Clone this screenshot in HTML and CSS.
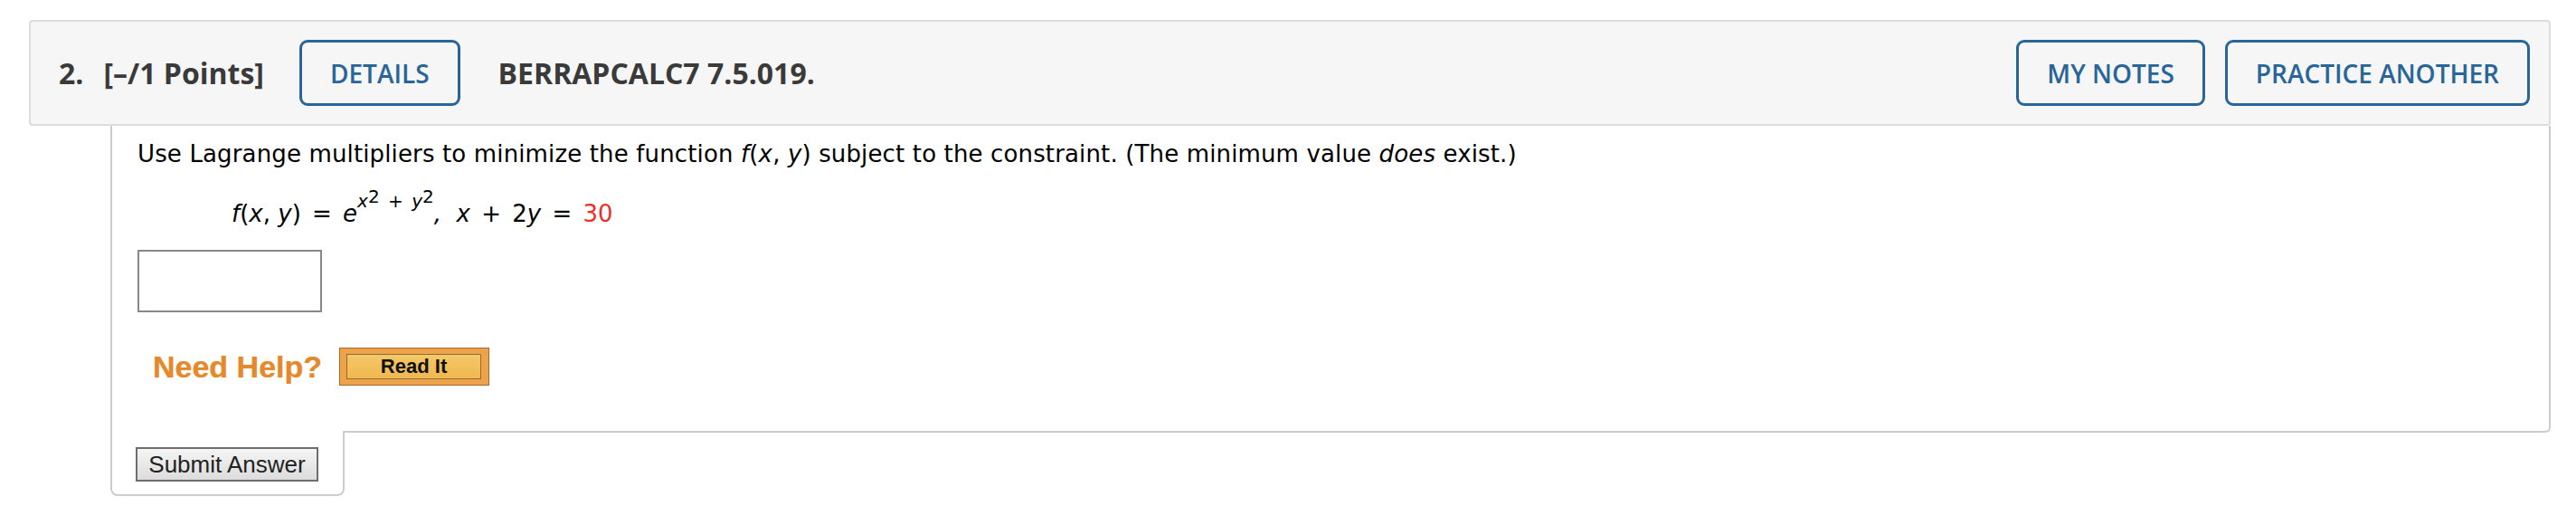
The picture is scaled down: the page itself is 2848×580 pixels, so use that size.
FILE: index.html
```html
<!DOCTYPE html>
<html>
<head>
<meta charset="utf-8">
<link rel="stylesheet" href="styles.css">
</head>
<body>
<div class="question">
  <div class="qhead">
    <span class="qnum">2.</span>
    <span class="qpts">[&ndash;/1 Points]</span>
    <span class="hbtn details">DETAILS</span>
    <span class="qid">BERRAPCALC7 7.5.019.</span>
    <span class="spacer"></span>
    <span class="hbtn">MY NOTES</span>
    <span class="hbtn">PRACTICE ANOTHER</span>
  </div>
  <div class="qbody">
    <p class="prompt">Use Lagrange multipliers to minimize the function <i>f</i>(<i>x</i>, <i>y</i>) subject to the constraint. (The minimum value <i>does</i> exist.)</p>
    <div class="formula"><i>f</i>(<i>x</i>, <i>y</i>) <span class="op">=</span> <i>e</i><span class="exp"><i>x</i><span class="sq">2</span> <span class="op">+</span> <i>y</i><span class="sq">2</span></span><i>,</i>&nbsp; <i>x</i> <span class="op">+</span> 2<i>y</i> <span class="op">=</span> <span class="red">30</span></div>
    <div class="answer"></div>
    <div class="help">
      <span class="needhelp">Need Help?</span>
      <span class="readit"><span class="readit-inner">Read It</span></span>
    </div>
  </div>
  <div class="submit-tab">
    <button class="submit">Submit Answer</button>
  </div>
</div>
</body>
</html>
```
FILE: styles.css
```css
html, body {
  margin: 0;
  padding: 0;
  background: #ffffff;
}
body {
  padding: 22px 28px 0 32px;
}
.question {
  width: 2788px;
}
.qhead {
  display: flex;
  align-items: center;
  box-sizing: border-box;
  height: 117px;
  background: #f6f6f6;
  border: 2px solid #dddddd;
  border-radius: 4px;
  padding: 0 21px 0 31px;
  font-family: "Open Sans", "Liberation Sans", sans-serif;
  color: #3a3a3a;
}
.qnum, .qpts, .qid {
  font-size: 32px;
  font-weight: 700;
}
.qpts {
  margin-left: 22px;
}
.details {
  margin-left: 39px;
}
.qid {
  margin-left: 42px;
}
.spacer {
  flex: 1;
}
.hbtn {
  display: inline-flex;
  align-items: center;
  box-sizing: border-box;
  height: 73px;
  padding: 0 31px;
  border: 3px solid #286598;
  border-radius: 9px;
  color: #286598;
  font-size: 28px;
  font-weight: 600;
}
.hbtn + .hbtn {
  margin-left: 22px;
}
.qbody {
  margin-left: 90px;
  border-left: 2px solid #cccccc;
  border-right: 2px solid #cccccc;
  border-bottom: 2px solid #cccccc;
  border-bottom-right-radius: 6px;
  padding: 15px 0 50px 28px;
  font-family: "DejaVu Sans", Verdana, sans-serif;
  font-size: 26px;
  line-height: 32px;
  color: #000000;
}
.prompt {
  margin: 0;
  letter-spacing: 0.14px;
}
.formula {
  margin: 31px 0 0 104px;
}
.op {
  margin: 0 4px;
}
.exp {
  font-size: 20px;
  line-height: 0;
  vertical-align: 16px;
}
.exp .op {
  margin: 0 3px;
}
.sq {
  vertical-align: 5px;
}
.red {
  color: #e8312a;
}
.answer {
  margin-top: 24px;
  box-sizing: border-box;
  width: 204px;
  height: 69px;
  border: 2px solid #888888;
  background: #ffffff;
}
.help {
  display: flex;
  align-items: center;
  margin-top: 39px;
  height: 42px;
}
.needhelp {
  margin-left: 17px;
  font-family: "Liberation Sans", Arial, sans-serif;
  font-weight: 700;
  font-size: 34px;
  color: #e4892c;
  text-shadow: 0 0 1px rgba(228, 137, 44, 0.6);
}
.readit {
  margin-left: 19px;
  display: inline-block;
  box-sizing: border-box;
  width: 166px;
  height: 42px;
  padding: 6px 8px 6px 7px;
  background: #eea24a;
  border: 1px solid #a26a2b;
}
.readit-inner {
  display: flex;
  align-items: center;
  justify-content: center;
  box-sizing: border-box;
  height: 28px;
  border: 1px solid #8e6d38;
  background: linear-gradient(#f6c868, #efb850);
  font-family: "Liberation Sans", Arial, sans-serif;
  font-weight: 700;
  font-size: 22px;
  color: #111111;
}
.submit-tab {
  margin-left: 90px;
  margin-top: -2px;
  box-sizing: border-box;
  width: 259px;
  background: #ffffff;
  border-left: 2px solid #cccccc;
  border-right: 2px solid #cccccc;
  border-bottom: 2px solid #cccccc;
  border-bottom-left-radius: 8px;
  border-bottom-right-radius: 8px;
  padding: 18px 0 14px 26px;
}
.submit {
  display: block;
  box-sizing: border-box;
  width: 202px;
  height: 38px;
  margin: 0;
  padding: 0;
  border: 2px solid #6e6e6e;
  border-radius: 0;
  background: linear-gradient(#f5f5f5, #dcdcdc);
  font-family: "Liberation Sans", Arial, sans-serif;
  font-size: 26px;
  color: #222222;
}
```
